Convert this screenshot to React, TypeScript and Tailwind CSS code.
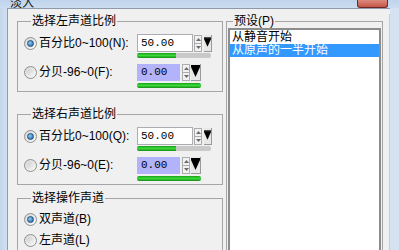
import React from "react";

const ui = "font-['Liberation_Sans','Noto_Sans_CJK_SC',sans-serif]";
const mono = "font-['Liberation_Mono','Noto_Sans_CJK_SC',monospace]";

function Radio({ checked }: { checked?: boolean }) {
  return (
    <span className="w-[13px] h-[13px] rounded-full border border-[#8e8f8f] bg-linear-to-br from-[#d6d6d6] to-[#fbfbfb] flex items-center justify-center shrink-0">
      {checked ? (
        <span className="w-[7px] h-[7px] rounded-full border border-[#1d4f7c] bg-[radial-gradient(circle_at_35%_35%,#8fd0f5,#1a5c9e)]" />
      ) : (
        <span className="w-[7px] h-[7px] rounded-full bg-linear-to-br from-[#cfcfcf] to-[#f4f4f4]" />
      )}
    </span>
  );
}

function Spin() {
  return (
    <div className="w-[8px] h-[17px] flex flex-col border border-[#acacac] bg-[#f2f2f2] shrink-0">
      <div className="flex-1 flex items-center justify-center border-b border-[#acacac]">
        <svg width="5" height="3" viewBox="0 0 5 3">
          <path d="M0 3 L2.5 0 L5 3Z" fill="#6b6b6b" />
        </svg>
      </div>
      <div className="flex-1 flex items-center justify-center">
        <svg width="5" height="3" viewBox="0 0 5 3">
          <path d="M0 0 L5 0 L2.5 3Z" fill="#6b6b6b" />
        </svg>
      </div>
    </div>
  );
}

function Drop({ w }: { w: number }) {
  return (
    <div className={`${w === 8 ? "w-[8px]" : "w-[10px]"} h-[17px] bg-[#e8e8e8] border-r border-b border-[#9a9a9a] shrink-0 flex justify-center`}>
      <svg width="9" height="14" viewBox="0 0 9 14">
        <rect x="0" y="1" width="9" height="2" fill="#000" />
        <path d="M0 3 L9 3 L4.5 13Z" fill="#000" />
      </svg>
    </div>
  );
}

function Bar({ full }: { full?: boolean }) {
  return (
    <div className={`h-[5px] ${full ? "w-[64px]" : "w-[74px]"} rounded-[2px] bg-[#c9c9c9] flex overflow-hidden`}>
      <div className={`${full ? "w-[64px]" : "w-[39px]"} h-full bg-linear-to-b from-[#17a317] via-[#3cd83c] to-[#138f13]`} />
    </div>
  );
}

function RatioGroup({ title, k1, k2 }: { title: string; k1: string; k2: string }) {
  return (
    <fieldset className="border border-[#a5a5a5] h-[78px] pl-[6px] pt-[6px]">
      <legend className="ml-[7px] px-[1px] text-[12px] leading-[14px]">{title}</legend>
      <div className="flex flex-col">
        <div className="flex h-[18px] items-center">
          <div className="w-[113px] flex items-center gap-[2px] text-[12px] leading-[14px]">
            <Radio checked />
            <span>百分比0~100({k1}):</span>
          </div>
          <div className="w-[56px] h-[18px] border border-[#abadb3] bg-white flex items-center pl-[3px]">
            <span className={`${mono} text-[11px] leading-[12px]`}>50.00</span>
          </div>
          <div className="ml-[1px]"><Spin /></div>
          <div className="ml-[2px]"><Drop w={8} /></div>
        </div>
        <div className="ml-[113px] mt-[1px]"><Bar /></div>
        <div className="flex h-[18px] items-center mt-[5px]">
          <div className="w-[113px] flex items-center gap-[2px] text-[12px] leading-[14px]">
            <Radio />
            <span>分贝-96~0({k2}):</span>
          </div>
          <div className="w-[43px] h-[17px] bg-[#b3b3fb] flex items-center pl-[4px]">
            <span className={`${mono} text-[11px] leading-[12px]`}>0.00</span>
          </div>
          <div className="ml-[2px]"><Spin /></div>
          <div className="ml-[1px]"><Drop w={10} /></div>
        </div>
        <div className="ml-[113px] mt-[2px]"><Bar full /></div>
      </div>
    </fieldset>
  );
}

export default function App() {
  return (
    <div className={`${ui} w-[399px] h-[250px] overflow-hidden bg-[#cbdcef] flex flex-col text-black`}>
      <div className="h-[8px] shrink-0 flex bg-linear-to-b from-[#bfd4ec] to-[#cadcf0]">
        <div className="ml-[10px] h-[8px] overflow-hidden flex items-end">
          <span className="text-[12px] leading-[12px] text-[#1a1a1a] mb-[-1px]">淡入</span>
        </div>
        <div className="flex-1" />
        <div className="w-[31px] h-[8px] mr-[11px] rounded-b-[3px] border border-t-0 border-[#6a2a2a] bg-linear-to-b from-[#d98a7e] to-[#c75446]" />
      </div>
      <div className="flex-1 flex">
        <div className="w-[7px] shrink-0 bg-linear-to-r from-[#c3d6ec] to-[#d2e1f1]" />
        <div className="flex-1 bg-[#f0f0f0] border-l border-t border-[#8e9aa8] flex pl-[9px] pt-[5px] gap-[3px]">
          <div className="w-[206px] flex flex-col shrink-0">
            <RatioGroup title="选择左声道比例" k1="N" k2="F" />
            <div className="mt-[15px]">
              <RatioGroup title="选择右声道比例" k1="Q" k2="E" />
            </div>
            <fieldset className="mt-[6px] border border-[#a5a5a5] h-[80px] pl-[6px] pt-[6px]">
              <legend className="ml-[7px] px-[1px] text-[12px] leading-[14px]">选择操作声道</legend>
              <div className="flex flex-col gap-[5px]">
                <div className="flex h-[16px] items-center gap-[2px] text-[12px] leading-[14px]">
                  <Radio checked />
                  <span>双声道(B)</span>
                </div>
                <div className="flex h-[16px] items-center gap-[2px] text-[12px] leading-[14px]">
                  <Radio />
                  <span>左声道(L)</span>
                </div>
              </div>
            </fieldset>
          </div>
          <fieldset className="w-[157px] h-[260px] border border-[#a5a5a5] px-[1px] shrink-0 flex flex-col">
            <legend className="ml-[5px] px-[1px] text-[12px] leading-[14px]">预设(P)</legend>
            <div className="h-[240px] border-2 border-[#8c8c8c] bg-white flex flex-col text-[12px]">
              <div className="h-[14px] leading-[14px] pl-[2px]">从静音开始</div>
              <div className="h-[13px] leading-[13px] pl-[2px] bg-[#3399ff] text-white">从原声的一半开始</div>
            </div>
          </fieldset>
          <div className="flex-1" />
          <div className="w-[1px] bg-[#b9cde5]" />
        </div>
        <div className="w-[9px] shrink-0 bg-[#d4e2f2]" />
      </div>
    </div>
  );
}
